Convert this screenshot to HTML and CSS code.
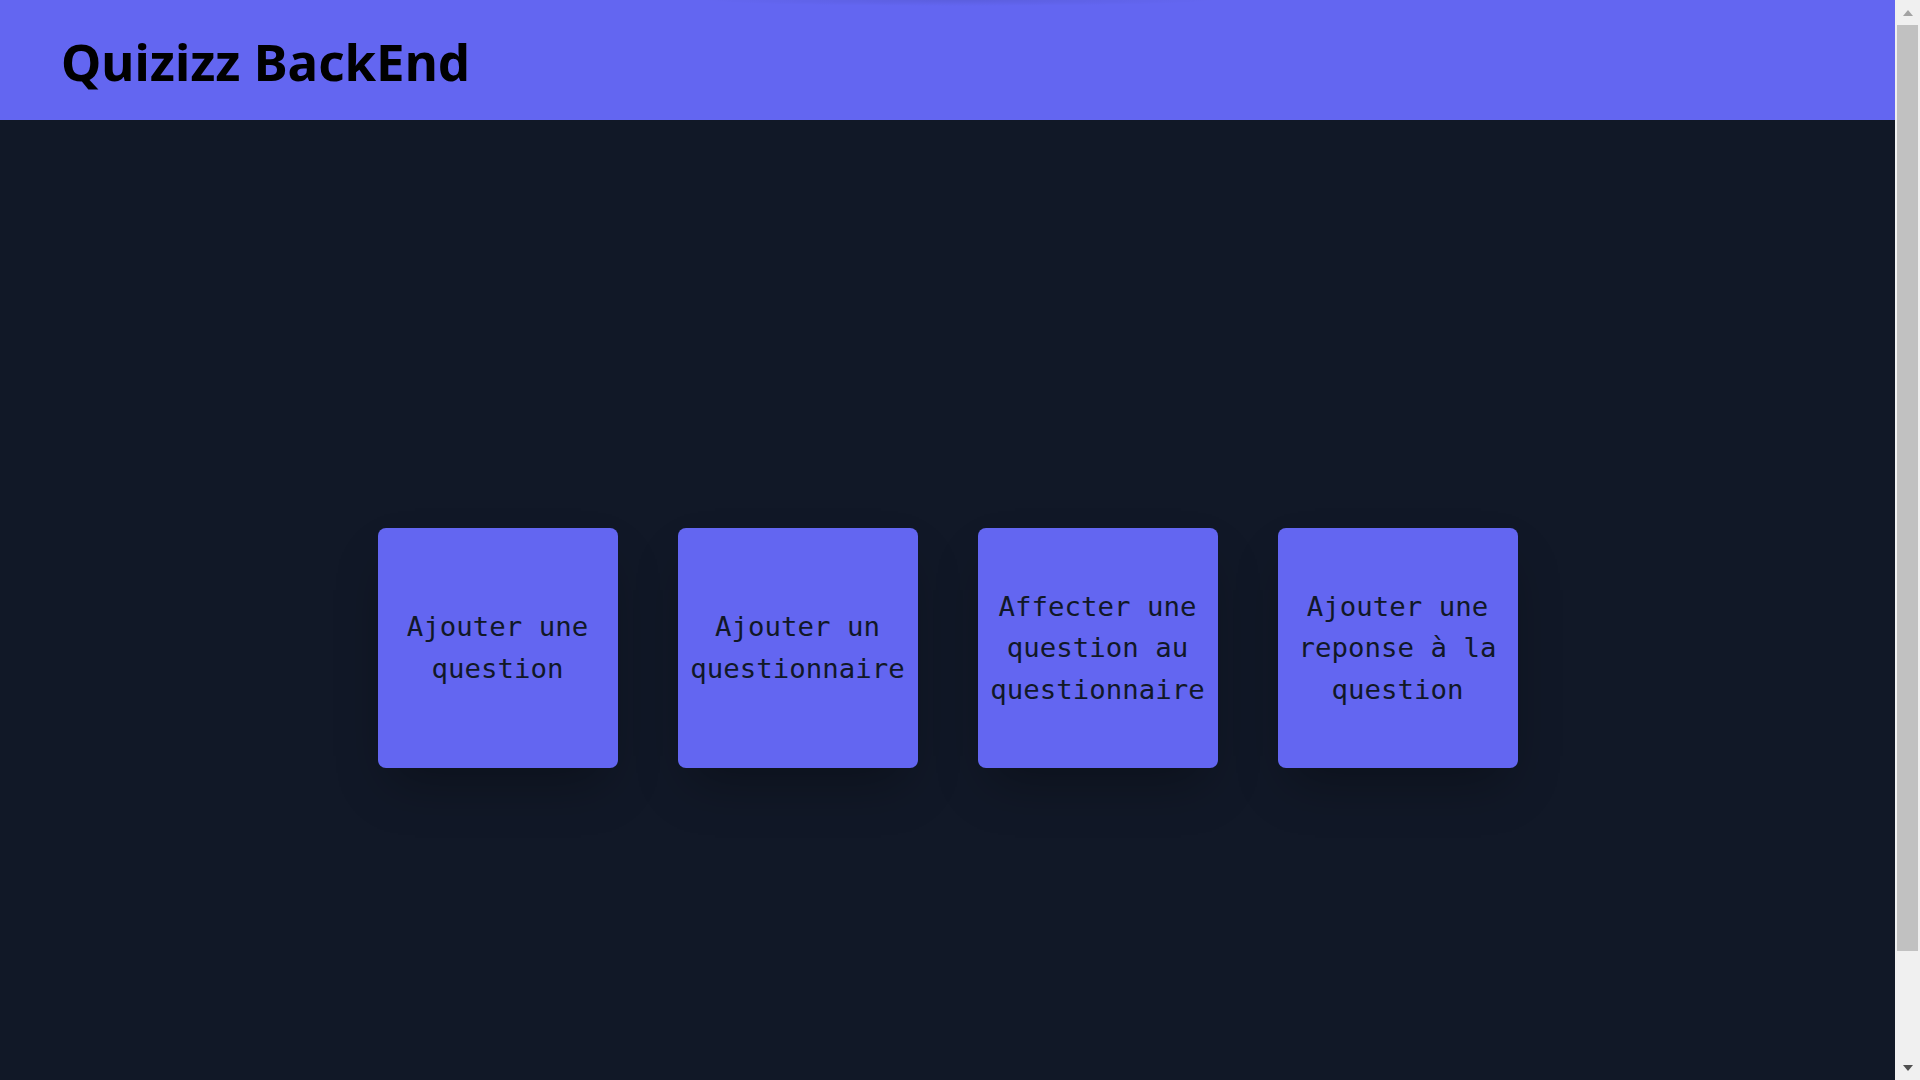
FILE: index.html
```html
<!DOCTYPE html>
<html lang="fr">
<head>
<meta charset="utf-8">
<title>Quizizz BackEnd</title>
<link rel="stylesheet" href="styles.css">
</head>
<body>
<div class="page">
  <header class="topbar">
    <h1 class="title">Quizizz BackEnd</h1>
  </header>
  <main class="main">
    <div class="cards">
      <a class="card" href="#">Ajouter une question</a>
      <a class="card" href="#">Ajouter un questionnaire</a>
      <a class="card" href="#">Affecter une question au questionnaire</a>
      <a class="card" href="#">Ajouter une reponse à la question</a>
    </div>
  </main>
</div>
<div class="scrollbar" aria-hidden="true">
  <div class="sb-btn sb-up"><span class="tri-up"></span></div>
  <div class="sb-track"><div class="sb-thumb"></div></div>
  <div class="sb-btn sb-down"><span class="tri-down"></span></div>
</div>
</body>
</html>
```
FILE: styles.css
```css
html {
  background: #111827;
  scrollbar-width: none;
}
html::-webkit-scrollbar {
  display: none;
}
body {
  margin: 0;
  background: #111827;
  font-family: "Noto Sans", "Open Sans", sans-serif;
}
.page {
  margin-right: 25px;
}
.topbar {
  height: 120px;
  box-sizing: border-box;
  display: flex;
  align-items: center;
  padding-left: 61px;
  padding-top: 2px;
  background-color: #6366f1;
  background-image: radial-gradient(ellipse 260px 6px at 960px 0, rgba(0, 0, 0, 0.08), rgba(0, 0, 0, 0));
}
.title {
  margin: 0;
  font-size: 51px;
  font-weight: 700;
  color: #000;
  line-height: 1;
}
.main {
  height: 1080px;
  display: flex;
  align-items: center;
  justify-content: center;
  padding-bottom: 24px;
  box-sizing: border-box;
}
.cards {
  display: flex;
  gap: 60px;
}
.card {
  width: 240px;
  height: 240px;
  box-sizing: border-box;
  padding: 0 8px;
  display: flex;
  align-items: center;
  justify-content: center;
  text-align: center;
  background: #6366f1;
  border-radius: 8px;
  box-shadow: 0 25px 50px -12px rgba(0, 0, 0, 0.3);
  color: #111827;
  text-decoration: none;
  font-family: "DejaVu Sans Mono", "Liberation Mono", monospace;
  font-size: 27.4px;
  line-height: 41.6px;
}
.scrollbar {
  position: fixed;
  top: 0;
  right: 0;
  width: 25px;
  height: 100vh;
  display: flex;
  flex-direction: column;
  background: #f0f0f0;
}
.sb-btn {
  height: 25px;
  flex: none;
  display: flex;
  align-items: center;
  justify-content: center;
}
.sb-track {
  flex: 1;
  display: flex;
  flex-direction: column;
  padding: 0 2px;
}
.sb-thumb {
  height: 926px;
  background: #c1c1c1;
}
.tri-up {
  width: 0;
  height: 0;
  border-left: 5.5px solid transparent;
  border-right: 5.5px solid transparent;
  border-bottom: 6px solid #a3a3a3;
}
.tri-down {
  width: 0;
  height: 0;
  border-left: 5.5px solid transparent;
  border-right: 5.5px solid transparent;
  border-top: 6px solid #505050;
}
```
